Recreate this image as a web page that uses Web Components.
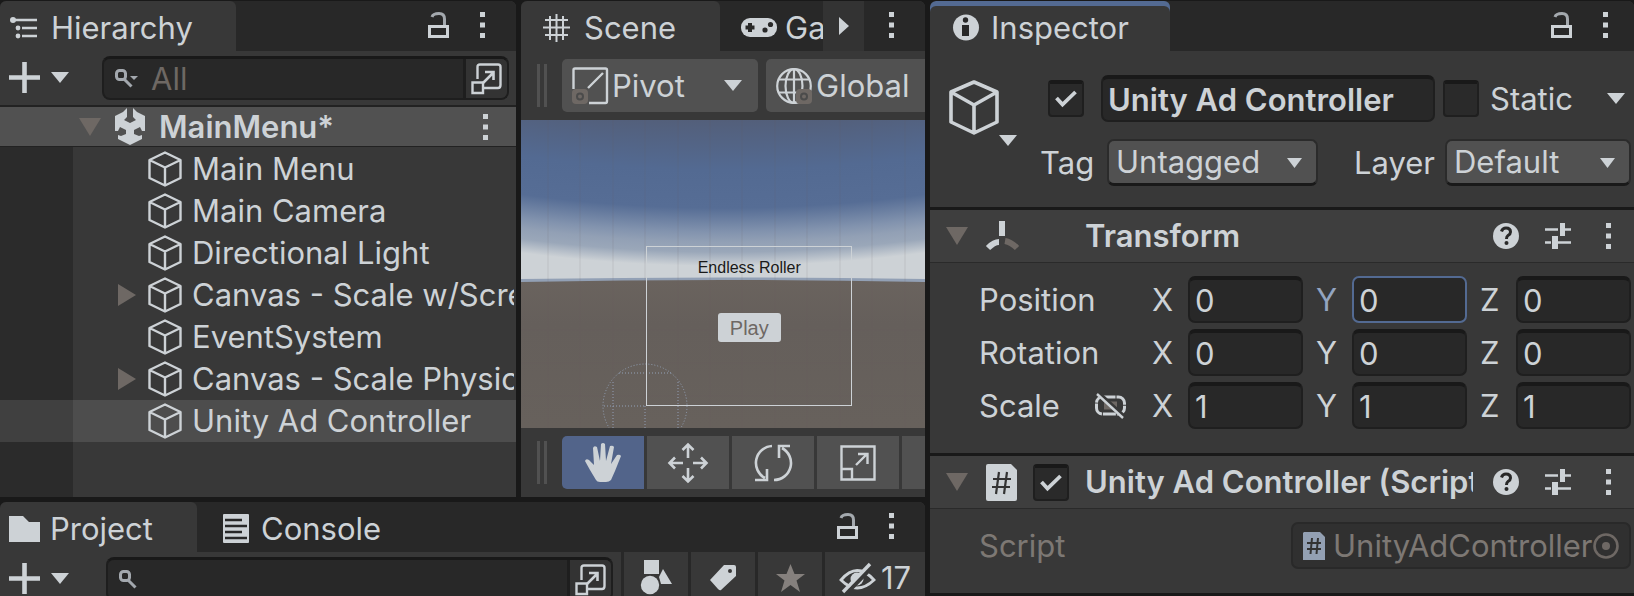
<!DOCTYPE html>
<html lang="en">
<head>
<meta charset="utf-8">
<title>Endless Roller - MainMenu</title>
<style>
  html, body { margin: 0; height: 100%; }
  body {
    --bg: #383838; --dark: #282828; --edge: #191919; --raised: #515151;
    --text: #cdd2d6; --dim: #6e6864; --accent: #536a92; --line: #222;
    background: var(--edge); color: var(--text); overflow: hidden;
    font: 400 31px/40px Inter, "Liberation Sans", sans-serif;
    font-optical-sizing: none;
  }
</style>
</head>
<body>
<editor-workspace>
  <dock-panel slot="hierarchy">
    <dock-tab slot="tabs" icon="list" active style="--tab-width:236px;--tab-gap:14px">Hierarchy</dock-tab>
    <ui-button slot="actions" icon="lock" label="Lock"></ui-button>
    <ui-button slot="actions" icon="kebab" label="Menu"></ui-button>
    <search-bar placeholder="All" filter></search-bar>
    <scene-tree heading="MainMenu*">
      <tree-item>Main Menu</tree-item>
      <tree-item>Main Camera</tree-item>
      <tree-item>Directional Light</tree-item>
      <tree-item parent>Canvas - Scale w/Screen</tree-item>
      <tree-item>EventSystem</tree-item>
      <tree-item parent>Canvas - Scale Physical</tree-item>
      <tree-item selected>Unity Ad Controller</tree-item>
    </scene-tree>
  </dock-panel>

  <dock-panel slot="scene">
    <dock-tab slot="tabs" icon="grid" active style="--tab-width:199px;--tab-pad:22px;--tab-gap:14px">Scene</dock-tab>
    <dock-tab slot="tabs" icon="gamepad" style="--tab-width:103px;--tab-pad:21px;--tab-gap:8px">Game</dock-tab>
    <ui-button slot="tabs" icon="next" label="More tabs" style="--button-bg:#333;--button-width:41px"></ui-button>
    <ui-button slot="actions" icon="kebab" label="Menu"></ui-button>
    <tool-strip>
      <handle-mode icon="pivot" arrow>Pivot</handle-mode>
      <handle-mode icon="globe">Global</handle-mode>
    </tool-strip>
    <scene-view></scene-view>
    <tool-strip tight>
      <tool-button icon="hand" label="View" pressed></tool-button>
      <tool-button icon="move" label="Move"></tool-button>
      <tool-button icon="rotate" label="Rotate"></tool-button>
      <tool-button icon="scale" label="Scale"></tool-button>
      <tool-button label="Rect"></tool-button>
    </tool-strip>
  </dock-panel>

  <dock-panel slot="project">
    <dock-tab slot="tabs" icon="folder" active style="--tab-width:197px;--tab-pad:9px;--tab-gap:10px">Project</dock-tab>
    <dock-tab slot="tabs" icon="console" style="--tab-width:207px;--tab-pad:26px;--tab-gap:12px">Console</dock-tab>
    <ui-button slot="actions" icon="lock" label="Lock"></ui-button>
    <ui-button slot="actions" icon="kebab" label="Menu"></ui-button>
    <search-bar style="--search-start:37px;--search-end:8px">
      <filter-button icon="shapes" label="Search by type"></filter-button>
      <filter-button icon="tag" label="Search by label"></filter-button>
      <filter-button icon="star" label="Save search" style="color:#85807d"></filter-button>
      <filter-button icon="hidden" label="Hidden packages" wide>17</filter-button>
    </search-bar>
  </dock-panel>

  <dock-panel slot="inspector" style="--actions-end:26px">
    <dock-tab slot="tabs" icon="info" active focused style="--tab-width:240px;--tab-pad:23px;--tab-gap:12px">Inspector</dock-tab>
    <ui-button slot="actions" icon="lock" label="Lock"></ui-button>
    <ui-button slot="actions" icon="kebab" label="Menu"></ui-button>
    <object-header name="Unity Ad Controller"></object-header>
    <component-section heading="Transform" icon="transform">
      <vector-field label="Position" values="0 0 0" focus-axis="Y"></vector-field>
      <vector-field label="Rotation" values="0 0 0"></vector-field>
      <vector-field label="Scale" values="1 1 1" link></vector-field>
    </component-section>
    <component-section heading="Unity Ad Controller (Script)" icon="script" toggle>
      <script-field label="Script" value="UnityAdController"></script-field>
    </component-section>
  </dock-panel>
</editor-workspace>

<script>
const ICONS = {
  list: [27, 22, '<g fill="currentColor"><circle cx="3" cy="3" r="3"/><circle cx="8" cy="11" r="2.4"/><circle cx="8" cy="19" r="2.4"/></g><path d="M3 3H27M12 11H27M12 19H27" stroke="currentColor" stroke-width="2.4"/>'],
  lock: [21, 26, '<rect x="1.5" y="14.5" width="18" height="10" fill="none" stroke="currentColor" stroke-width="3"/><path d="M4 5Q5 1.5 11 1.5Q16.5 1.5 16.5 7V13" fill="none" stroke="#a4a9ae" stroke-width="3"/>'],
  kebab: [5, 26, '<path d="M0 0h5v5H0zM0 10.500h5v5H0zM0 21h5v5H0z" fill="currentColor"/>'],
  plus: [31, 31, '<path d="M15.500 0V31M0 15.500H31" stroke="currentColor" stroke-width="4.600"/>'],
  down: [18, 11, '<path d="M0 0H18L9 11Z" fill="currentColor"/>'],
  smalldown: [15, 10, '<path d="M0 0H15L7.500 10Z" fill="currentColor"/>'],
  fold: [22, 18, '<path d="M0 0H22L11 18Z" fill="#6e6864"/>'],
  unfold: [18, 22, '<path d="M0 0V22L18 11Z" fill="#6e6864"/>'],
  next: [10, 18, '<path d="M0 0V18L10 9Z" fill="currentColor"/>'],
  magnifier: [18, 19, '<rect x="1.500" y="1.500" width="9" height="9" rx="3" fill="none" stroke="#a3a8ae" stroke-width="3"/><path d="M9 10L16.500 17.500" stroke="#a3a8ae" stroke-width="3"/>'],
  magnifierdown: [23, 19, '<rect x="1.500" y="1.500" width="9" height="9" rx="3" fill="none" stroke="#a3a8ae" stroke-width="3"/><path d="M9 10L16.500 17.500" stroke="#a3a8ae" stroke-width="3"/><path d="M15 7H23L19 11Z" fill="#a3a8ae"/>'],
  popout: [31, 31, '<path d="M6.500 16V4Q6.500 1.500 9 1.500H27Q29.500 1.500 29.500 4V22Q29.500 25 27 25H13" fill="none" stroke="currentColor" stroke-width="2.400"/><path d="M1.500 19.500H12V30H1.500Z" fill="none" stroke="currentColor" stroke-width="2.400"/><path d="M12 20L22 10M14 9H22.500V17" fill="none" stroke="currentColor" stroke-width="2.600"/>'],
  unity: [30, 37, '<path d="M8 4L12 0V9L9 12L15 15L21 12L18 9V0L22 4L30 8V23H27L25 19L19 22V26L24 28L27 27V31L15 37L3 31V27L6 28L11 26V22L5 19L3 23H0V8Z" fill="currentColor"/>'],
  cube: [34, 36, '<path d="M17 1.500L32.500 9V27L17 34.500L1.500 27V9ZM1.500 9L17 16.500L32.500 9M17 16.500V34.500" fill="none" stroke="currentColor" stroke-width="2.400" stroke-linejoin="round"/>'],
  bigcube: [50, 55, '<path d="M25 2L48 12V42L25 53L2 42V12ZM2 12L25 25L48 12M25 25V53" fill="none" stroke="currentColor" stroke-width="3.600" stroke-linejoin="round"/>'],
  grid: [27, 28, '<path d="M7 2V26M13.500 0V28M20 2V26M2 6H25M0 13.500H27M2 21H25" stroke="currentColor" stroke-width="2"/>'],
  gamepad: [36, 19, '<rect width="36" height="19" rx="9" fill="currentColor"/><path d="M9 5V14M4.500 9.500H13.500" stroke="#282828" stroke-width="4"/><circle cx="24" cy="12" r="2.600" fill="#282828"/><circle cx="29.500" cy="6.500" r="2.600" fill="#282828"/>'],
  pivot: [37, 38, '<path d="M1.500 22V3Q1.500 1.500 3 1.500H33.500Q35 1.500 35 3V34Q35 36 33.500 36H17M16 21L31 6" fill="none" stroke="currentColor" stroke-width="2.400"/><rect x="0" y="22" width="16" height="15" rx="4" fill="#6e6864"/><circle cx="8" cy="29.500" r="3" fill="none" stroke="#4b4b4b" stroke-width="2"/>'],
  globe: [37, 38, '<g fill="none" stroke="currentColor" stroke-width="2.200"><circle cx="18" cy="19" r="16.800"/><ellipse cx="18" cy="19" rx="8.500" ry="16.800"/><path d="M18 2V36M3 12.500H33M3 25.500H33"/></g><rect x="20" y="22" width="16" height="15" rx="4" fill="#6e6864"/><circle cx="28" cy="29.500" r="3" fill="none" stroke="#4b4b4b" stroke-width="2"/>'],
  hand: [36, 40, '<path d="M11 37L5 27L0 18Q1 15 4 17L9 22L8 5Q9 2 12 4L15 18L16 1Q18 -1 20 1L21 18L25 3Q28 2 29 4L26 21L32 12Q35 11 36 13L30 28L26 37Q24 39 21 39H15Q12 39 11 37Z" fill="currentColor"/>'],
  move: [40, 40, '<path d="M20 15V2M14.500 7L20 1.500L25.500 7M20 25V38M14.500 33L20 38.500L25.500 33M15 20H2M7 14.500L1.500 20L7 25.500M25 20H38M33 14.500L38.500 20L33 25.500" fill="none" stroke="currentColor" stroke-width="2.600"/>'],
  rotate: [36, 38, '<path d="M17 2A17 17 0 0 0 10 34M19 36A17 17 0 0 0 27 4M0 36H12V25M35 2H24V14" fill="none" stroke="currentColor" stroke-width="2.600"/>'],
  scale: [36, 36, '<path d="M1.500 1.500H34.500V34.500H1.500ZM1.500 24H12V34.500M16 20L27 9M18 9H27.500V19" fill="none" stroke="currentColor" stroke-width="2.400"/>'],
  folder: [31, 26, '<path d="M0 0H14L20 6H31V26H0Z" fill="currentColor"/>'],
  console: [26, 29, '<rect width="26" height="29" rx="1" fill="currentColor"/><path d="M2 6H19M2 12H24M2 18H19M2 24H24" stroke="#282828" stroke-width="2.600"/>'],
  shapes: [31, 36, '<path d="M3 0H18V14H3ZM22 9L31 24H20L18 17Z" fill="currentColor"/><circle cx="9" cy="25" r="9.200" fill="currentColor"/>'],
  tag: [26, 26, '<path d="M14 0H24Q26 0 26 2V11L11 25Q10 26 8 24L0 15Z" fill="currentColor"/><circle cx="20" cy="6" r="2" fill="#383838"/>'],
  star: [29, 28, '<path d="M14.500 0L18.500 10H29L20.500 16.500L24 28L14.500 21L5 28L8.500 16.500L0 10H10.500Z" fill="currentColor"/>'],
  hidden: [37, 31, '<path d="M2 17Q18 -2 35 17Q18 33 2 17Z" fill="none" stroke="currentColor" stroke-width="2.800"/><circle cx="18" cy="16" r="6.500" fill="currentColor"/><path d="M6 32L34 3" stroke="#383838" stroke-width="4"/><path d="M4 29L31 1" stroke="currentColor" stroke-width="3.400"/>'],
  info: [26, 27, '<circle cx="13" cy="13.500" r="13" fill="currentColor"/><circle cx="12.500" cy="6" r="2.700" fill="#282828"/><rect x="9" y="11" width="7" height="11" fill="#282828"/>'],
  help: [26, 26, '<circle cx="13" cy="13" r="13" fill="currentColor"/><path d="M8.500 8.500Q9.500 5 13 5Q17.500 5 17.500 9Q17.500 11 15 12.500Q13.500 13.500 13.500 16" fill="none" stroke="#282828" stroke-width="3"/><circle cx="13.500" cy="20" r="2" fill="#282828"/>'],
  sliders: [26, 26, '<path d="M0 6.500H13M18 6.500H26M0 19.500H6M13 19.500H26" stroke="currentColor" stroke-width="2.600"/><path d="M15 0h5v13h-5zM7 13h6v13H7z" fill="currentColor"/>'],
  transform: [33, 31, '<path d="M16 0V15" stroke="currentColor" stroke-width="6"/><path d="M13 21Q8 21 2 27" stroke="currentColor" stroke-width="6" fill="none"/><path d="M19 20Q25 21 31 27" stroke="#6e6864" stroke-width="6" fill="none"/>'],
  script: [31, 37, '<path d="M2 0H25L31 6V35Q31 37 29 37H2Q0 37 0 35V2Q0 0 2 0Z" fill="currentColor"/><path d="M13 8L10 30M21 8L18 30M7 15H25M6 23H24" stroke="#333" stroke-width="2.200"/>'],
  smallscript: [22, 28, '<path d="M1 0H17L22 5V28H0V1Z" fill="#93a0b3"/><path d="M9 6L7.500 22M15 6L13.500 22M4 11H18M4 17H18" stroke="#333" stroke-width="2"/>'],
  link: [31, 26, '<rect x="1.500" y="4" width="28" height="17" rx="6" fill="none" stroke="currentColor" stroke-width="3" stroke-dasharray="13 1"/><rect x="9" y="8.500" width="13" height="8" fill="#6e6864"/><path d="M4 1L29 24" stroke="#383838" stroke-width="5"/><path d="M2 1L28 25" stroke="currentColor" stroke-width="2.400"/>'],
  target: [26, 26, '<circle cx="13" cy="13" r="11.500" fill="none" stroke="#6e6864" stroke-width="2.600"/><circle cx="13" cy="13" r="4" fill="#6e6864"/>'],
  check: [22, 17, '<path d="M1.500 8L7.500 14.500L20.500 2" fill="none" stroke="currentColor" stroke-width="3.800"/>'],
};

class Base extends HTMLElement {
  connectedCallback() {
    if (this.shadowRoot) return;
    this.attachShadow({ mode: 'open' }).innerHTML =
      `<style>*{box-sizing:border-box}:host{box-sizing:border-box;min-width:0}
      button,input,select{font:inherit;color:inherit;border:0;background:none;margin:0;padding:0;outline:0}
      button{cursor:pointer}${this.css()}</style>${this.html()}`;
  }
  a(name) { return this.getAttribute(name) || ''; }
  has(name) { return this.hasAttribute(name); }
  css() { return ':host{display:block}'; }
  html() { return '<slot></slot>'; }
}
const define = (tag, cls) => customElements.define(tag, cls);

define('ui-icon', class extends Base {
  css() { return ':host{display:block;flex:none}svg{display:block;overflow:visible}'; }
  html() {
    const [w, h, body] = ICONS[this.a('name')];
    return `<svg width="${w}" height="${h}" viewBox="0 0 ${w} ${h}" aria-hidden="true">${body}</svg>`;
  }
});

define('editor-workspace', class extends Base {
  css() { return `
    :host{display:grid;height:100vh;padding-top:1px;grid-template-columns:925fr 704fr;gap:5px}
    .left{display:grid;grid-template-rows:minmax(0,1fr) 94px;gap:5px;min-width:0;min-height:0}
    .top{display:grid;grid-template-columns:516fr 404fr;gap:5px;min-height:0}`; }
  html() { return `
    <div class="left"><div class="top"><slot name="hierarchy"></slot><slot name="scene"></slot></div>
    <slot name="project"></slot></div><slot name="inspector"></slot>`; }
});

define('dock-panel', class extends Base {
  css() { return `
    :host{display:flex;flex-direction:column;background:var(--bg);overflow:hidden;border-radius:6px 6px 0 0;min-height:0}
    header{display:flex;flex:none;height:50px;background:var(--dark)}
    nav{display:flex;flex:1;min-width:0}
    .actions{display:flex;gap:31px;padding:0 var(--actions-end,31px) 2px 0}
    ::slotted(*){flex:none}`; }
  html() { return `<header><nav><slot name="tabs"></slot></nav><div class="actions"><slot name="actions"></slot></div></header><slot></slot>`; }
});

define('dock-tab', class extends Base {
  css() { return `
    :host{display:block;width:var(--tab-width)}
    button{display:flex;align-items:center;gap:var(--tab-gap);width:100%;height:50px;padding:3px 0 0 var(--tab-pad,10px);overflow:hidden;white-space:nowrap}
    :host([active]) button{background:var(--bg);border-radius:6px 6px 0 0}
    :host([focused]) button{box-shadow:inset 0 5px var(--accent)}`; }
  html() { return `<button role="tab"><ui-icon name="${this.a('icon')}"></ui-icon><slot></slot></button>`; }
});

define('ui-button', class extends Base {
  css() { return `:host{display:flex}button{display:grid;place-items:center;width:var(--button-width,auto);background:var(--button-bg,none)}`; }
  html() { return `<button aria-label="${this.a('label')}"><ui-icon name="${this.a('icon')}"></ui-icon></button>`; }
});

define('search-bar', class extends Base {
  css() { return `
    :host{display:flex;align-items:flex-start}
    .add{display:flex;align-items:center;gap:11px;padding:11px 0 0 9px}
    .box{display:flex;flex:1;min-width:0;height:44px;margin:5px var(--search-end,7px) 0 var(--search-start,33px);background:var(--dark);border:2px solid #1e1e1e;border-top:3px solid var(--edge);border-radius:8px;overflow:hidden}
    label{display:flex;align-items:center;gap:13px;flex:1;min-width:0;padding-left:11px}
    input{flex:1;min-width:0;width:100%}
    input::placeholder{color:var(--dim);opacity:1}
    .box button{display:grid;place-items:center;width:44px;background:#333;border-left:3px solid #1e1e1e}`; }
  html() { return `
    <button class="add" aria-label="Add"><ui-icon name="plus"></ui-icon><ui-icon name="down"></ui-icon></button>
    <div class="box"><label><ui-icon name="${this.has('filter') ? 'magnifierdown' : 'magnifier'}"></ui-icon>
    <input type="text" placeholder="${this.a('placeholder')}" aria-label="Search"></label>
    <button aria-label="Open search"><ui-icon name="popout"></ui-icon></button></div><slot></slot>`; }
});

define('filter-button', class extends Base {
  css() { return `
    :host{display:block;width:67px;border-left:3px solid var(--dark)}
    :host([wide]){width:103px}
    button{display:flex;align-items:center;justify-content:center;gap:5px;width:100%;height:50px;padding-top:2px}`; }
  html() { return `<button aria-label="${this.a('label')}"><ui-icon name="${this.a('icon')}"></ui-icon><slot></slot></button>`; }
});

define('scene-tree', class extends Base {
  css() { return `
    :host{display:flex;flex-direction:column;flex:1 1 0 !important;margin-top:5px}
    .head{display:flex;align-items:center;height:41px;padding:0 28px 0 79px;background:var(--raised);border-top:2px solid var(--line);font-weight:600}
    .head ui-icon + ui-icon{margin:0 14px}
    .head button{margin-left:auto}
    .rows{flex:1;padding-top:1px;border-top:1px solid var(--line);background:linear-gradient(90deg,#2b2b2b 73px,transparent 73px)}`; }
  html() { return `<div class="head"><ui-icon name="fold"></ui-icon><ui-icon name="unity"></ui-icon><span>${this.a('heading')}</span>
    <button aria-label="Scene menu"><ui-icon name="kebab"></ui-icon></button></div><div class="rows" role="tree"><slot></slot></div>`; }
});

define('tree-item', class extends Base {
  css() { return `
    :host{display:grid;grid-template-columns:30px 34px minmax(0,1fr);align-items:center;height:42px;padding:0 2px 0 118px}
    :host([selected]){background:linear-gradient(90deg,#404040 73px,#4d4d4d 73px)}
    span{padding-left:10px;overflow:hidden;white-space:nowrap}`; }
  html() { return `<div>${this.has('parent') ? '<ui-icon name="unfold"></ui-icon>' : ''}</div><ui-icon name="cube"></ui-icon><span><slot></slot></span>`; }
});

define('tool-strip', class extends Base {
  css() { return `
    :host{display:flex;align-items:center;height:69px;padding-left:16px;gap:8px;overflow:hidden}
    :host([tight]){gap:3px}
    i{flex:none;width:10px;height:43px;margin-right:7px;border:solid var(--raised);border-width:0 3px}
    :host([tight]) i{margin-right:12px}`; }
  html() { return '<i></i><slot></slot>'; }
});

define('handle-mode', class extends Base {
  css() { return `
    :host{display:block;flex:none;width:196px}
    button{display:flex;align-items:center;gap:3px;width:100%;height:53px;padding:0 16px 0 10px;background:var(--raised);border-radius:5px}
    .arrow{margin-left:auto}`; }
  html() { return `<button><ui-icon name="${this.a('icon')}"></ui-icon><slot></slot>${this.has('arrow') ? '<ui-icon class="arrow" name="down"></ui-icon>' : ''}</button>`; }
});

define('tool-button', class extends Base {
  css() { return `
    :host{display:block;flex:none}
    button{display:grid;place-items:center;width:82px;height:53px;background:var(--raised)}
    :host([pressed]) button{background:#52648a;border-radius:5px 0 0 5px}`; }
  html() { return `<button aria-label="${this.a('label')}">${this.a('icon') ? `<ui-icon name="${this.a('icon')}"></ui-icon>` : ''}</button>`; }
});

define('scene-view', class extends Base {
  css() { return `
    :host{display:block;position:relative;flex:1 1 0 !important;min-height:0;overflow:hidden}
    svg{display:block;width:100%;height:100%}
    .canvas{position:absolute;left:31%;top:41%;width:51%;height:52%;border:1px solid var(--text);display:flex;flex-direction:column;align-items:center;font:16px/20px "Liberation Sans",sans-serif;color:#191919}
    .title{margin-top:11px}
    button{width:63px;height:29px;margin-top:35px;border-radius:3px;background:var(--text);color:var(--dim);font-size:20px}`; }
  html() {
    const stop = (y, c) => `<stop offset="${(1400 + y) / 1561}" stop-color="${c}"/>`;
    const xs = [27, 59, 92, 124, 157, 189, 221, 254, 286, 319, 351, 384].map(x => `M${x} 0V308`).join('');
    return `<svg viewBox="0 0 404 308" preserveAspectRatio="none" aria-hidden="true">
      <defs><radialGradient id="sky" gradientUnits="userSpaceOnUse" cx="202" cy="-1400" r="1561">
      ${stop(0, '#535f7a')}${stop(50, '#536a92')}${stop(88, '#566d95')}${stop(112, '#8293ae')}${stop(122, '#92a0b5')}${stop(132, '#9aa7b9')}${stop(146, '#cdd2d6')}${stop(161, '#cdd2d6')}
      </radialGradient><linearGradient id="ground" x2="0" y2="1"><stop offset="0" stop-color="#6a635e"/><stop offset=".3" stop-color="#655f5b"/><stop offset="1" stop-color="#67615c"/></linearGradient></defs>
      <rect width="404" height="308" fill="#cdd2d6"/><rect width="404" height="160" fill="url(#sky)"/>
      <path d="M0 159Q202 156 404 159V308H0Z" fill="#92a0b5"/><path d="M0 162Q202 158 404 162V308H0Z" fill="url(#ground)"/>
      <path d="${xs}M0 210H404M0 243H404M0 276H404" stroke="#6e6864" stroke-opacity=".15"/>
      <g fill="none" stroke="#92a0b5" stroke-dasharray="1 2"><circle cx="124" cy="286" r="42"/><path d="M98 253H150M83 286H124M92 262V308M157 262V308M124 286V308"/></g></svg>
      <div class="canvas"><div class="title">Endless Roller</div><button>Play</button></div>`;
  }
});

define('check-box', class extends Base {
  css() { return `
    :host{display:grid;width:36px;height:37px;flex:none}
    input,ui-icon{grid-area:1/1}
    input{appearance:none;width:36px;height:37px;background:#2a2a2a;border:2px solid #1f1f1f;border-top:4px solid var(--edge);border-radius:4px}
    ui-icon{place-self:center;pointer-events:none}`; }
  html() { return `<input type="checkbox" aria-label="${this.a('label')}" ${this.has('checked') ? 'checked' : ''}>${this.has('checked') ? '<ui-icon name="check"></ui-icon>' : ''}`; }
});

define('object-header', class extends Base {
  css() { return `
    :host{display:flex;height:156px;padding:24px 3px 0 19px}
    .kind{display:grid;grid-template-columns:50px 18px;align-content:start;padding-top:5px;margin-right:23px}
    .kind .more{grid-area:2/2}
    .rows{display:grid;grid-template-columns:minmax(0,1fr);gap:17px;flex:1;min-width:0;align-content:start}
    .row{display:flex;align-items:center;height:47px}
    .first{padding-left:8px}
    .name{flex:1;min-width:0;height:47px;margin:0 8px 0 17px;padding:0 5px;font-weight:600;background:var(--dark);border:2px solid #1f1f1f;border-top:4px solid var(--edge);border-radius:7px}
    .static{display:flex;align-items:center;gap:11px;width:164px}
    .options{width:24px}
    .row > label{flex:none}
    .tag{width:67px}
    .layer{width:127px;padding-right:10px;text-align:right}
    .pick{display:grid;flex:1;min-width:0}
    .pick.fixed{flex:none;width:186px}
    .pick > *{grid-area:1/1}
    .pick ui-icon{place-self:center end;margin-right:16px;pointer-events:none}
    select{appearance:none;width:100%;height:47px;padding:0 7px;background:var(--raised);border:2px solid #2b2b2b;border-bottom:3px solid var(--edge);border-radius:7px}`; }
  html() { return `
    <button class="kind" aria-label="Icon"><ui-icon name="bigcube"></ui-icon><ui-icon class="more" name="down"></ui-icon></button>
    <div class="rows">
      <div class="row first"><check-box label="Active" checked></check-box>
        <input class="name" type="text" aria-label="Name" value="${this.a('name')}">
        <label class="static"><check-box label="Static"></check-box>Static</label>
        <button class="options" aria-label="Static options"><ui-icon name="down"></ui-icon></button></div>
      <div class="row"><label class="tag" for="tag">Tag</label>
        <div class="pick"><select id="tag"><option>Untagged</option></select><ui-icon name="smalldown"></ui-icon></div>
        <label class="layer" for="layer">Layer</label>
        <div class="pick fixed"><select id="layer"><option>Default</option></select><ui-icon name="smalldown"></ui-icon></div></div>
    </div>`; }
});

define('component-section', class extends Base {
  css() { return `
    :host{display:block;border-top:3px solid var(--edge)}
    :host(:last-of-type){border-bottom:3px solid var(--edge)}
    header{display:flex;align-items:center;height:53px;padding:0 23px 0 16px;background:#3e3e3e;border-bottom:1px solid #2a2a2a}
    .badge{display:flex;align-items:center;gap:16px;width:117px;padding-left:18px}
    h2{flex:1;min-width:0;margin:0 20px 0 0;font:inherit;font-weight:600;overflow:hidden;white-space:nowrap}
    nav{display:flex;align-items:center;gap:26px}
    nav button:last-child{padding-left:9px}
    .body{display:grid;gap:6px;padding:13px 3px 24px 49px}`; }
  html() { return `<header><ui-icon name="fold"></ui-icon><div class="badge"><ui-icon name="${this.a('icon')}"></ui-icon>${this.has('toggle') ? '<check-box label="Enabled" checked></check-box>' : ''}</div>
    <h2>${this.a('heading')}</h2><nav><button aria-label="Help"><ui-icon name="help"></ui-icon></button><button aria-label="Presets"><ui-icon name="sliders"></ui-icon></button><button aria-label="Menu"><ui-icon name="kebab"></ui-icon></button></nav></header>
    <div class="body"><slot></slot></div>`; }
});

define('vector-field', class extends Base {
  css() { return `
    :host{display:grid;grid-template-columns:160px repeat(3,minmax(0,1fr));gap:13px;align-items:center;height:47px}
    .label{display:flex;align-items:center;justify-content:space-between;padding-right:13px}
    .axis{display:grid;grid-template-columns:36px minmax(0,1fr);align-items:center}
    input{width:100%;height:47px;padding:0 5px;background:var(--dark);border:2px solid #1f1f1f;border-top:4px solid var(--edge);border-radius:7px}
    .on{color:#93a4c0}
    .on input{color:var(--text);border:2px solid var(--accent);padding-top:2px}`; }
  html() {
    const v = this.a('values').split(' ');
    return `<div class="label"><span>${this.a('label')}</span>${this.has('link') ? '<ui-icon name="link"></ui-icon>' : ''}</div>` +
      ['X', 'Y', 'Z'].map((n, i) => `<label class="axis ${this.a('focus-axis') === n ? 'on' : ''}">${n}<input type="text" value="${v[i]}"></label>`).join('');
  }
});

define('script-field', class extends Base {
  css() { return `
    :host{display:flex;align-items:center;justify-content:space-between;height:47px;color:#7d7874}
    .box{display:flex;align-items:center;width:340px;height:47px;padding:0 10px;background:#303030;border:2px solid #292929;border-radius:7px}
    input{flex:1;min-width:0;width:100%;padding-left:8px}
    button{flex:none}`; }
  html() { return `<label for="object">${this.a('label')}</label><div class="box"><ui-icon name="smallscript"></ui-icon>
    <input id="object" type="text" readonly value="${this.a('value')}"><button aria-label="Pick object"><ui-icon name="target"></ui-icon></button></div>`; }
});
</script>
</body>
</html>
